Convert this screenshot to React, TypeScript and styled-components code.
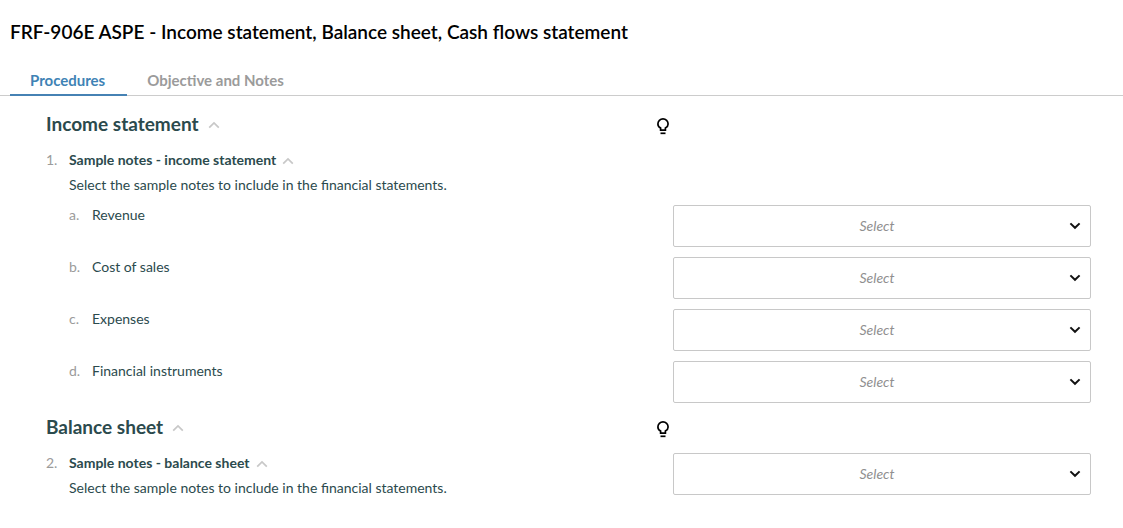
import React, { useState } from "react";
import styled, { createGlobalStyle } from "styled-components";

const GlobalStyle = createGlobalStyle`
  *, *::before, *::after { box-sizing: border-box; }
  body {
    margin: 0;
    background: #fff;
    color: #2b4a4d;
    font-family: Lato, "Liberation Sans", sans-serif;
    font-size: 14px;
    line-height: 20px;
  }
`;

const Title = styled.h1`
  margin: 0;
  padding: 20px 10px;
  color: #000;
  font-size: 19px;
  font-weight: 600;
  line-height: 24px;
`;

const TabBar = styled.div`
  display: flex;
  padding: 0 10px;
  border-bottom: 1px solid #ccc;
`;

const Tab = styled.button<{ $active: boolean }>`
  margin: 0 0 -1px;
  padding: 6px 22px 4px 20px;
  height: 32px;
  border: 0;
  border-bottom: 2px solid ${(p) => (p.$active ? "#4682b4" : "transparent")};
  background: none;
  color: ${(p) => (p.$active ? "#3f83b5" : "#9b9b9b")};
  font: 700 15px/20px Lato, "Liberation Sans", sans-serif;
  white-space: nowrap;
  cursor: pointer;
`;

const Content = styled.main`
  padding: 4px 32px 20px 46px;
`;

const SectionHeader = styled.div`
  display: flex;
  align-items: center;
  justify-content: space-between;
  width: 60%;
  height: 50px;
`;

const SectionTitle = styled.h2`
  display: flex;
  align-items: center;
  gap: 9px;
  margin: 0 0 2px;
  font-size: 19px;
  font-weight: 700;
  line-height: 24px;
`;

const IconButton = styled.button`
  display: flex;
  margin: 0;
  padding: 0;
  border: 0;
  background: none;
  color: inherit;
  cursor: pointer;
`;

const Row = styled.div`
  display: grid;
  grid-template-columns: 60% 40%;
  align-items: start;
  margin-bottom: 10px;

  &:last-child { margin-bottom: 0; }
`;

const Entry = styled.div<{ $nested?: boolean }>`
  display: flex;
  padding-left: ${(p) => (p.$nested ? 23 : 0)}px;
`;

const Marker = styled.span`
  flex: 0 0 23px;
  color: #9b9b9b;
`;

const ProcedureTitle = styled.h3`
  display: flex;
  align-items: center;
  gap: 6px;
  margin: 0 0 5px;
  font-size: 14px;
  font-weight: 700;
  line-height: 20px;
`;

const Description = styled.p`
  margin: 0;
`;

const SelectBox = styled.div`
  position: relative;
  height: 42px;
`;

const SelectInput = styled.select`
  appearance: none;
  width: 100%;
  height: 100%;
  padding: 0 20px 0 10px;
  border: 1px solid #c8c8c8;
  border-radius: 2px;
  background: #fff;
  color: #8f8f8f;
  font: italic 400 14px/20px Lato, "Liberation Sans", sans-serif;
  text-align: center;
  text-align-last: center;
`;

const SelectArrow = styled.svg`
  position: absolute;
  top: 17px;
  right: 10px;
  pointer-events: none;
`;

const Collapse = ({ label }: { label: string }) => (
  <IconButton type="button" aria-label={`Collapse ${label}`}>
    <svg width="12" height="12" viewBox="0 0 12 12" fill="none" stroke="#c8c8c8" strokeWidth="1.7">
      <path d="M1.2 9.7 6 4.9l4.8 4.8" />
    </svg>
  </IconButton>
);

const Hint = ({ label }: { label: string }) => (
  <IconButton type="button" aria-label={`Guidance for ${label}`}>
    <svg width="20" height="20" viewBox="0 0 20 20" fill="none" stroke="#000" strokeWidth="1.7">
      <path d="M7.6 15.2v-2.1C5.9 12.1 4.9 10.6 4.9 8.9a5.1 5.1 0 0 1 10.2 0c0 1.7-1 3.2-2.7 4.2v2.1z" />
      <path d="M7.5 18.3h5" />
    </svg>
  </IconButton>
);

const Answer = ({ label }: { label: string }) => (
  <SelectBox>
    <SelectInput aria-label={label} defaultValue="">
      <option value="">Select</option>
    </SelectInput>
    <SelectArrow width="12" height="8" viewBox="0 0 12 8" fill="none" stroke="#111" strokeWidth="2">
      <path d="M1.4 1.4 6 5.8l4.6-4.4" />
    </SelectArrow>
  </SelectBox>
);

interface Section {
  title: string;
  number: string;
  procedure: string;
  items: string[];
}

const sections: Section[] = [
  {
    title: "Income statement",
    number: "1.",
    procedure: "Sample notes - income statement",
    items: ["Revenue", "Cost of sales", "Expenses", "Financial instruments"],
  },
  {
    title: "Balance sheet",
    number: "2.",
    procedure: "Sample notes - balance sheet",
    items: [],
  },
];

const tabs = ["Procedures", "Objective and Notes"];

export default function App() {
  const [active, setActive] = useState(tabs[0]);
  return (
    <>
      <GlobalStyle />
      <Title>FRF-906E ASPE - Income statement, Balance sheet, Cash flows statement</Title>
      <TabBar role="tablist">
        {tabs.map((tab) => (
          <Tab
            key={tab}
            type="button"
            role="tab"
            aria-selected={tab === active}
            $active={tab === active}
            onClick={() => setActive(tab)}
          >
            {tab}
          </Tab>
        ))}
      </TabBar>
      <Content>
        {sections.map((s) => (
          <section key={s.title}>
            <SectionHeader>
              <SectionTitle>
                {s.title}
                <Collapse label={s.title} />
              </SectionTitle>
              <Hint label={s.title} />
            </SectionHeader>
            <Row>
              <Entry>
                <Marker>{s.number}</Marker>
                <div>
                  <ProcedureTitle>
                    {s.procedure}
                    <Collapse label={s.procedure} />
                  </ProcedureTitle>
                  <Description>
                    Select the sample notes to include in the financial statements.
                  </Description>
                </div>
              </Entry>
              {s.items.length === 0 && <Answer label={s.procedure} />}
            </Row>
            {s.items.map((item, i) => (
              <Row key={item}>
                <Entry $nested>
                  <Marker>{String.fromCharCode(97 + i)}.</Marker>
                  <span>{item}</span>
                </Entry>
                <Answer label={item} />
              </Row>
            ))}
          </section>
        ))}
      </Content>
    </>
  );
}
